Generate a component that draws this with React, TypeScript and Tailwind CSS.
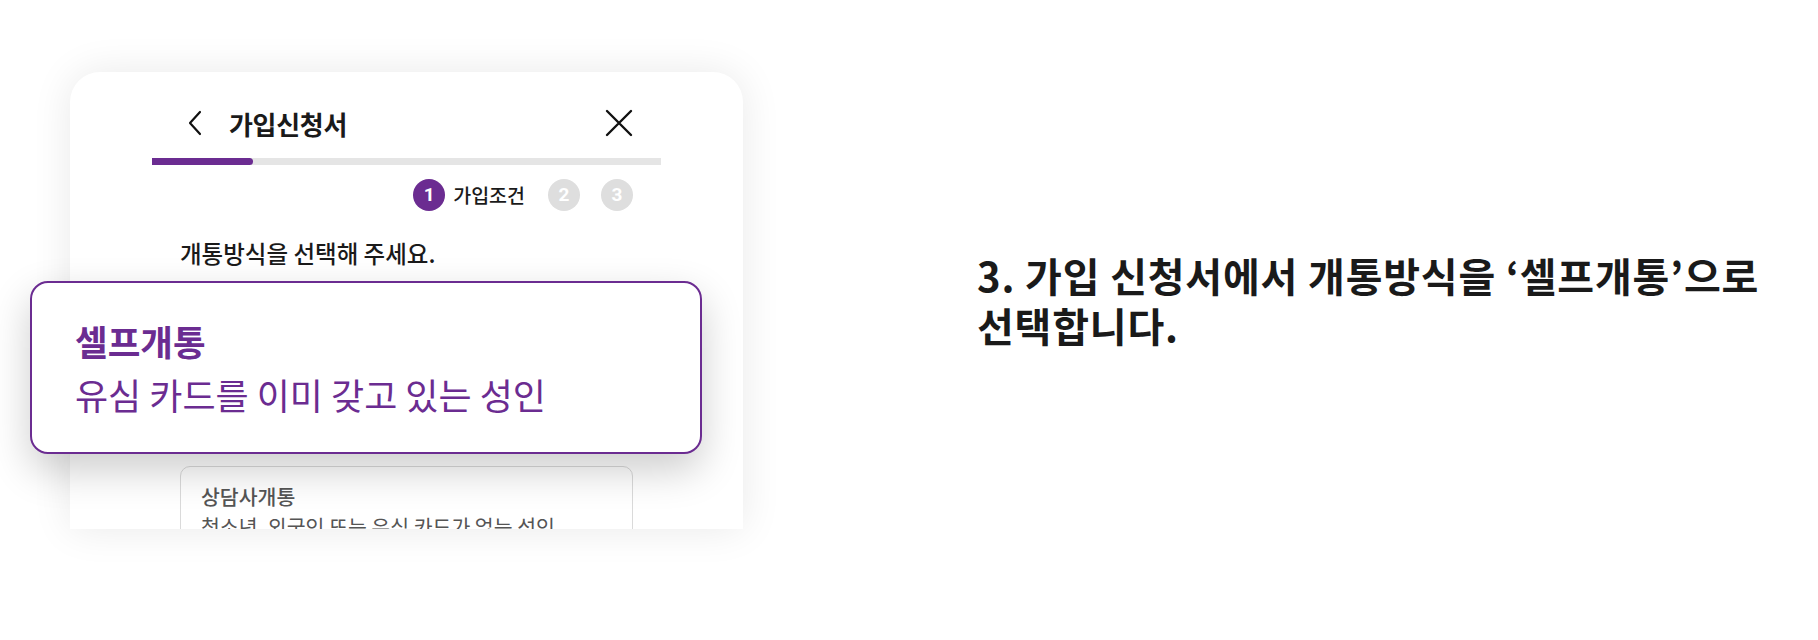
import React from 'react';

const ChevronLeft = () => (
  <svg width="16" height="26" viewBox="0 0 16 26" fill="none">
    <path d="M13 2 L3 13 L13 24" stroke="#111" strokeWidth="2.2" strokeLinecap="round" strokeLinejoin="round" />
  </svg>
);

const CloseIcon = () => (
  <svg width="28" height="28" viewBox="0 0 28 28" fill="none">
    <path d="M2 2 L26 26 M26 2 L2 26" stroke="#111" strokeWidth="2.4" strokeLinecap="round" />
  </svg>
);

const StepDot = ({ n, active }: { n: number; active?: boolean }) => (
  <div
    className={
      active
        ? 'w-[32px] h-[32px] rounded-full bg-[#6b2c91] text-white flex items-center justify-center text-[19px] font-bold font-["Roboto",sans-serif]'
        : 'w-[32px] h-[32px] rounded-full bg-[#dedede] text-white flex items-center justify-center text-[19px] font-bold font-["Roboto",sans-serif]'
    }
  >
    {n}
  </div>
);

export default function App() {
  return (
    <div className="w-[1818px] h-[640px] bg-white flex items-start font-['Noto_Sans_CJK_KR',sans-serif] text-[#1a1a1a] overflow-hidden">
      {/* left: phone mockup */}
      <div className="relative w-[743px] pl-[70px] pt-[72px] shrink-0">
        <div className="w-[673px] h-[457px] bg-white rounded-t-[30px] overflow-hidden shadow-[0_0_40px_rgba(0,0,0,0.09)] px-[82px]">
          {/* header */}
          <div className="h-[86px] pt-[36px] flex items-start justify-between pl-[35px] pr-[28px]">
            <div className="flex items-center gap-[26px] h-[30px]">
              <ChevronLeft />
              <span className="text-[26px] font-bold tracking-[-0.3px]">가입신청서</span>
            </div>
            <div className="h-[30px] flex items-center">
              <CloseIcon />
            </div>
          </div>

          {/* progress */}
          <div className="h-[7px] bg-[#e5e5e5] flex">
            <div className="w-[101px] h-full bg-[#6b2c91] rounded-r-full" />
          </div>

          {/* steps */}
          <div className="flex items-center justify-end pr-[28px] mt-[14px] h-[32px]">
            <div className="flex items-center gap-[8px] mr-[23px]">
              <StepDot n={1} active />
              <span className="text-[19.5px] font-medium">가입조건</span>
            </div>
            <StepDot n={2} />
            <div className="w-[21px]" />
            <StepDot n={3} />
          </div>

          <div className="px-[28px]">
            <p className="mt-[25px] text-[23.5px] font-medium leading-[34px]">
              개통방식을 선택해 주세요.
            </p>

            {/* hidden behind overlay */}
            <div className="h-[196px]" />

            <div className="border border-[#dadada] rounded-[10px] px-[20px] pt-[14px] pb-[16px]">
              <div className="text-[20.5px] font-medium text-[#555] leading-[30px]">상담사개통</div>
              <div className="text-[20.5px] text-[#555] leading-[30px]">
                청소년, 외국인 또는 유심 카드가 없는 성인
              </div>
            </div>
          </div>
        </div>

        {/* highlighted option overlay */}
        <div className="absolute left-[30px] top-[281px] w-[672px] h-[173px] bg-white border-[2.5px] border-[#6b2c91] rounded-[18px] shadow-[0_16px_40px_rgba(0,0,0,0.2)] pl-[43px] pt-[35px]">
          <div className="text-[35.5px] font-bold text-[#6b2c91] leading-[46px]">셀프개통</div>
          <div className="text-[36px] text-[#6b2c91] leading-[60px]">
            유심 카드를 이미 갖고 있는 성인
          </div>
        </div>
      </div>

      {/* right: instruction */}
      <div className="ml-[234px] mt-[250px] text-[40px] font-bold leading-[50px] tracking-[0.8px] text-[#1a1a1a]">
        <p>3. 가입 신청서에서 개통방식을 ‘셀프개통’으로</p>
        <p>선택합니다.</p>
      </div>
    </div>
  );
}
